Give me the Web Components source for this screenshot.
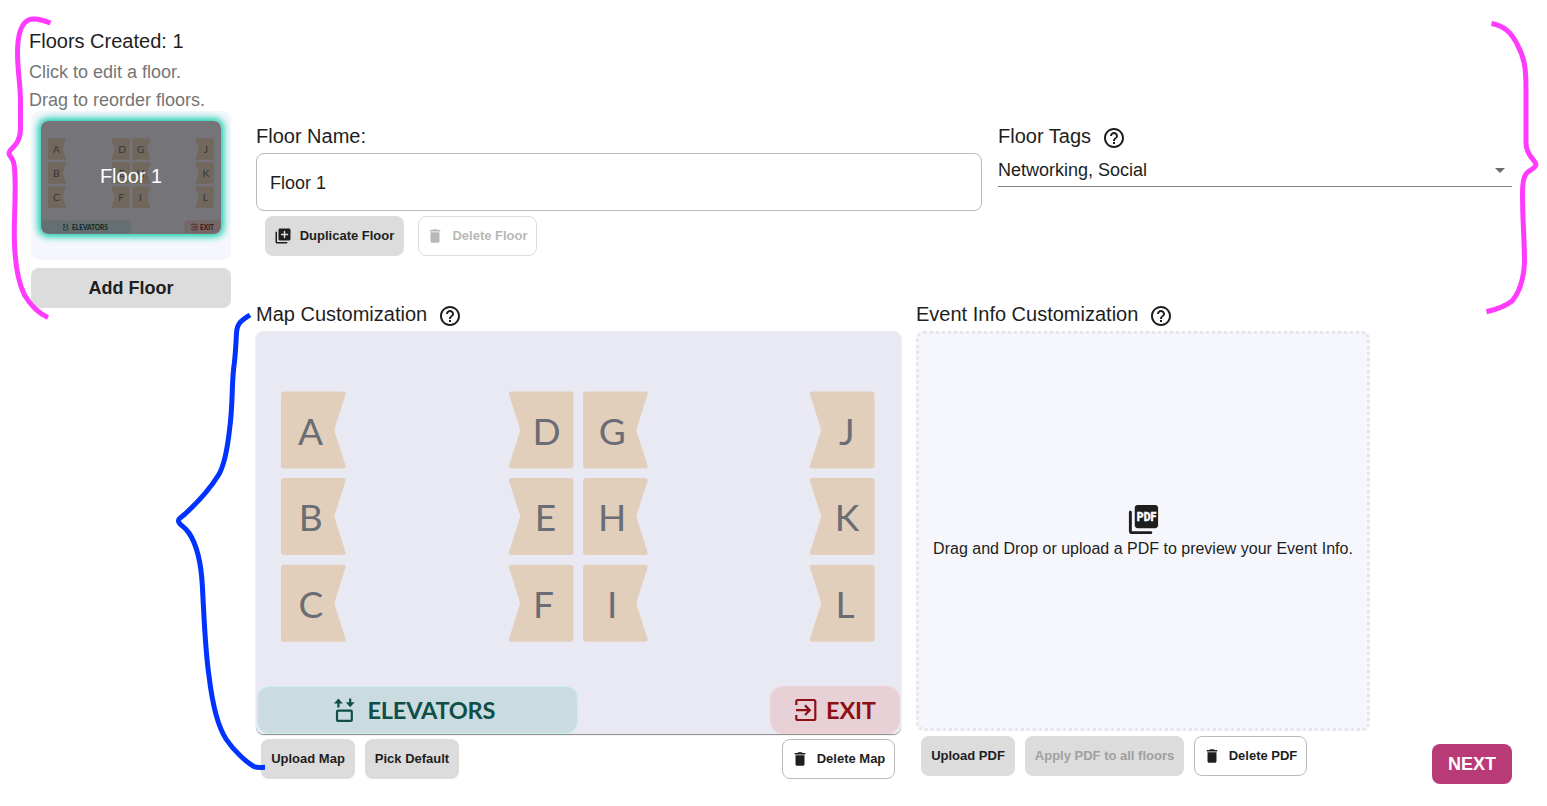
<!DOCTYPE html>
<html lang="en">
<head>
<meta charset="utf-8">
<title>Floors</title>
<style>
html,body{margin:0;background:#fff}
body{font-family:"Liberation Sans",Arial,sans-serif;color:#1e1e1e;height:806px;overflow:hidden}
</style>
</head>
<body>
<floor-editor></floor-editor>
<script>
const define = (name, html, setup) => {
  const tpl = document.createElement('template');
  tpl.innerHTML = html;
  customElements.define(name, class extends HTMLElement {
    connectedCallback() {
      if (this.shadowRoot) return;
      const root = this.attachShadow({mode: 'open'});
      root.append(tpl.content.cloneNode(true));
      if (setup) setup(this, root);
    }
  });
};

const ICONS = {
  help: '<path d="M11 18h2v-2h-2v2zm1-16C6.48 2 2 6.48 2 12s4.48 10 10 10 10-4.48 10-10S17.52 2 12 2zm0 18c-4.41 0-8-3.59-8-8s3.59-8 8-8 8 3.59 8 8-3.59 8-8 8zm0-14c-2.21 0-4 1.79-4 4h2c0-1.1.9-2 2-2s2 .9 2 2c0 2-3 1.75-3 5h2c0-2.25 3-2.5 3-5 0-2.21-1.79-4-4-4z"/>',
  trash: '<path d="M6 19c0 1.1.9 2 2 2h8c1.1 0 2-.9 2-2V7H6v12zM19 4h-3.5l-1-1h-5l-1 1H5v2h14V4z"/>',
  copy: '<path d="M3 6c-.6 0-1 .4-1 1v13c0 1.1.9 2 2 2h13c.6 0 1-.4 1-1s-.4-1-1-1H4V7c0-.6-.4-1-1-1zm17-4H8c-1.1 0-2 .9-2 2v12c0 1.1.9 2 2 2h12c1.1 0 2-.9 2-2V4c0-1.1-.9-2-2-2zm-2 9h-3v3c0 .6-.4 1-1 1s-1-.4-1-1v-3h-3c-.6 0-1-.4-1-1s.4-1 1-1h3V6c0-.6.4-1 1-1s1 .4 1 1v3h3c.6 0 1 .4 1 1s-.4 1-1 1z"/>',
  pdf: '<path d="M20 2H8c-1.1 0-2 .9-2 2v12c0 1.1.9 2 2 2h12c1.1 0 2-.9 2-2V4c0-1.1-.9-2-2-2zM3 6c-.6 0-1 .4-1 1v13c0 1.1.9 2 2 2h13c.6 0 1-.4 1-1s-.4-1-1-1H4V7c0-.6-.4-1-1-1z"/><text x="7.4" y="12.9" textLength="13.3" lengthAdjust="spacingAndGlyphs" font-family="Roboto,sans-serif" font-weight="900" font-size="8.2" fill="#fff" stroke="#fff" stroke-width=".2">PDF</text>',
  caret: '<path d="M7 10l5 5 5-5z"/>'
};
define('ui-icon', `<style>:host{display:block;flex:none}svg{display:block;width:100%;height:100%;fill:currentColor}</style><svg viewBox="0 0 24 24"></svg>`,
  (el, r) => {
    const s = el.getAttribute('size') || 24;
    el.style.width = el.style.height = s + 'px';
    r.querySelector('svg').innerHTML = ICONS[el.getAttribute('name')];
  });

define('ui-button', `<style>
:host{display:flex;flex:none;box-sizing:border-box;height:40px;border-radius:8px;background:#dcdcdc;align-items:center;justify-content:center;font-weight:700;font-size:13px;letter-spacing:0;white-space:nowrap;padding-bottom:1px}
:host([outlined]){background:#fff;border:1px solid #b9b9b9}
:host([disabled]){color:#a0a0a0}
:host([outlined][disabled]){color:#b8b8b8;border-color:#dcdcdc}
:host([large]){font-size:18px;padding-bottom:0}
:host([primary]){background:#b83b77;color:#fff}
::slotted(ui-icon){margin:1px 8px 0 -1px}
</style><slot></slot>`);

define('ui-heading', `<style>
:host{display:flex;height:32px;line-height:32px;font-size:20px;white-space:nowrap}
ui-icon{margin:6px 0 0 11px}
</style><slot></slot>`, (el, r) => {
  if (el.hasAttribute('help')) {
    const i = document.createElement('ui-icon');
    i.setAttribute('name', 'help');
    r.append(i);
  }
});

/* Booth map, shared by the large preview and the floor thumbnail */
define('floor-map', `<style>:host{display:block}svg{display:block;width:100%;height:100%}</style>
<svg viewBox="0 0 645 403">
<rect width="645" height="403" fill="#e9e9f3"/>
<g id="booths" font-family="Lato,sans-serif" font-size="37" fill="#6a6d75" text-anchor="middle"></g>
<rect x="1.5" y="355.5" width="320" height="47" rx="12" fill="#cadce0" stroke="#c6efe9"/>
<g fill="none" stroke="#0f4f48" stroke-width="2.2">
<rect x="81" y="379.7" width="14.8" height="10.2" rx="1"/>
<path d="M82.400 376.500v-6M94.200 367.500v6"/></g>
<path d="M78 372.5l4.4-5 4.4 5zM89.8 371.300l4.4 5 4.4-5z" fill="#0f4f48"/>
<text x="111.5" y="388" textLength="128" font-family="Lato,sans-serif" font-weight="700" font-size="23.6" fill="#0f4f48">ELEVATORS</text>
<rect x="514.5" y="355.5" width="129" height="47" rx="12" fill="#e8d0d7" stroke="#f3d3d8"/>
<g fill="none" stroke="#8e1014" stroke-width="2.200">
<path d="M540.300 374v-3.500q0-1.500 1.500-1.500h16q1.500 0 1.500 1.500v17q0 1.500-1.500 1.500h-16q-1.500 0-1.500-1.500v-3.500M540 379.200h13M549 374.400l4.8 4.8-4.8 4.8"/></g>
<text x="570" y="388.3" textLength="50" font-family="Lato,sans-serif" font-weight="700" font-size="23.6" fill="#8e1014">EXIT</text>
</svg>`, (el, r) => {
  const right = 'M3 0H62Q65.500 0 64.500 3L54 36Q53 38.500 54 41L64.500 74Q65.500 77 62 77H3Q0 77 0 74V3Q0 0 3 0Z';
  const cols = [[25, 0, 'ABC', [54.6, 54.7, 54.9]], [253, 1, 'DEF', [290.6, 289.4, 287.500]], [327, 0, 'GHI', [356.2, 356, 356.2]], [554, 1, 'JKL', [590.8, 591, 589]]];
  const rows = [60.6, 147, 233.8];
  let out = '';
  for (const [x, flip, names, tx] of cols)
    rows.forEach((y, i) => {
      out += `<path fill="#e2cfbb" d="${right}" transform="translate(${flip ? x + 64.5 : x} ${y})${flip ? ' scale(-1 1)' : ''}"/><text x="${tx[i]}" y="${y + 53.2}">${names[i]}</text>`;
    });
  r.querySelector('#booths').innerHTML = out;
});

define('floor-card', `<style>
:host{display:grid;width:180px;height:113px;border-radius:7px;box-shadow:0 0 7px 2.500px #19cfae;overflow:hidden}
floor-map,div{grid-area:1/1;min-width:0;min-height:0}
div{position:relative;background:rgba(0,0,0,.5);color:#fff;font-size:20px;display:flex;align-items:center;justify-content:center;padding-bottom:3px}
</style><floor-map></floor-map><div><slot></slot></div>`);

define('floor-list', `<style>
:host{display:flex;flex-direction:column;width:202px}
p{margin:0;color:#757575;font-size:18px;line-height:28px;height:28px;white-space:nowrap}
ui-heading{height:33px}
.panel{box-sizing:border-box;width:200px;height:149px;margin:-3px 0 8px 2px;border-radius:8px;background:#f6f7fd;padding:10px}
ui-button{width:200px;margin-left:2px}
</style>
<ui-heading>Floors Created: 1</ui-heading>
<p>Click to edit a floor.</p><p>Drag to reorder floors.</p>
<div class="panel"><floor-card>Floor 1</floor-card></div>
<ui-button large>Add Floor</ui-button>`);

define('floor-details', `<style>
:host{display:grid;grid-template-columns:726px 514px;column-gap:16px;height:178px}
.input{box-sizing:border-box;height:58px;margin-top:1px;border:1px solid #b9b9b9;border-radius:8px;padding:0 13px;font-size:18px;line-height:58px}
.row{display:flex;gap:14px;margin:5px 0 0 9px}
.select{box-sizing:border-box;display:flex;justify-content:space-between;height:35px;border-bottom:1px solid #858585;font-size:18px;line-height:36px}
.select ui-icon{color:#6b6b6b;margin-top:6px}
</style>
<section><ui-heading>Floor Name:</ui-heading><div class="input">Floor 1</div>
<div class="row"><ui-button style="width:139px"><ui-icon name="copy" size="18"></ui-icon>Duplicate Floor</ui-button><ui-button outlined disabled style="width:119px"><ui-icon name="trash" size="18"></ui-icon>Delete Floor</ui-button></div></section>
<section><ui-heading help>Floor Tags</ui-heading><div class="select"><span>Networking, Social</span><ui-icon name="caret"></ui-icon></div></section>`);

define('map-panel', `<style>
:host{display:block;width:645px;flex:none}
floor-map{width:645px;height:403px;margin-top:1px;border-radius:8px;overflow:hidden;box-shadow:0 1px 1px #888,0 0 1px #ddd}
.row{display:flex;gap:10px;margin:5px 6px 0 5px}
.end{margin-left:auto}
</style>
<ui-heading help>Map Customization</ui-heading><floor-map></floor-map>
<div class="row"><ui-button style="width:94px">Upload Map</ui-button><ui-button style="width:94px">Pick Default</ui-button><ui-button class="end" outlined style="width:113px"><ui-icon name="trash" size="18"></ui-icon>Delete Map</ui-button></div>`);

define('event-panel', `<style>
:host{display:block;width:454px;flex:none}
.drop{box-sizing:border-box;height:400px;margin-top:1px;border:3px dotted #e5e5ee;border-radius:8px;background:#f6f7fd;display:flex;flex-direction:column;align-items:center;padding-top:168px;font-size:16px;line-height:24px;white-space:nowrap}
.row{display:flex;gap:10px;margin:5px 0 0 5px}
</style>
<ui-heading help>Event Info Customization</ui-heading>
<div class="drop"><ui-icon name="pdf" size="35"></ui-icon><span>Drag and Drop or upload a PDF to preview your Event Info.</span></div>
<div class="row"><ui-button style="width:94px">Upload PDF</ui-button><ui-button disabled style="width:159px">Apply PDF to all floors</ui-button><ui-button outlined style="width:113px"><ui-icon name="trash" size="18"></ui-icon>Delete PDF</ui-button></div>`);

/* Freehand braces drawn over the page */
define('brace-layer', `<style>:host{position:absolute;inset:0;pointer-events:none}svg{display:block}</style>
<svg width="1547" height="806" fill="none" stroke-width="5" stroke-linejoin="round">
<path stroke="#ff3bff" d="M50.500 23C41 19.500 34 17.500 28.500 20C20 24 17.500 38 17.500 53C17.500 72 20.700 84 20.500 105V128C20.500 146 9.500 148 9 153C9 157 13 156 14.300 166C16.500 186 14.300 205 14.300 235C14.500 262 17.500 281 24.500 295C31 306 38 313 48 317.500"/>
<path stroke="#ff3bff" d="M1491.500 23.500C1505 26 1512 33 1518 46C1524 57 1526 67 1526 88V143C1526 156 1536 160 1536 165C1535 169 1530 169 1526 174C1523 178 1522.500 183 1522.500 193C1522.500 222 1524.500 238 1524.500 263C1523.500 280 1519 293 1512 301C1506 306 1498 309 1486.500 311.700"/>
<path stroke="#0033ff" d="M250 315C242 320 237 323 236.500 333C235.500 350 235.500 356 233.700 368C231.500 388 233 404 229.500 430C227 452 224 466 218.500 475C208 492 197 503 185 514C181 517.500 177 519 179 522.500C181 526 185 527 189 533C197 545 201 562 202.300 585C204.500 625 205 648 209 676C212 701 217 725 226 739C234 751 246 762 254 766.500C257 768 261 767.300 265 767.300"/>
</svg>`);

define('floor-editor', `<style>
:host{display:flex;position:relative;box-sizing:border-box;width:1547px;height:806px;padding:25px 0 0 29px;overflow:hidden;gap:25px}
main{padding-top:95px;width:1256px}
.panels{display:flex;gap:15px}
.next{margin:446px 0 0 47px;width:80px}
</style>
<floor-list></floor-list>
<main><floor-details></floor-details>
<div class="panels"><map-panel></map-panel><event-panel></event-panel><ui-button class="next" large primary>NEXT</ui-button></div></main>
<brace-layer></brace-layer>`);
</script>
</body>
</html>
